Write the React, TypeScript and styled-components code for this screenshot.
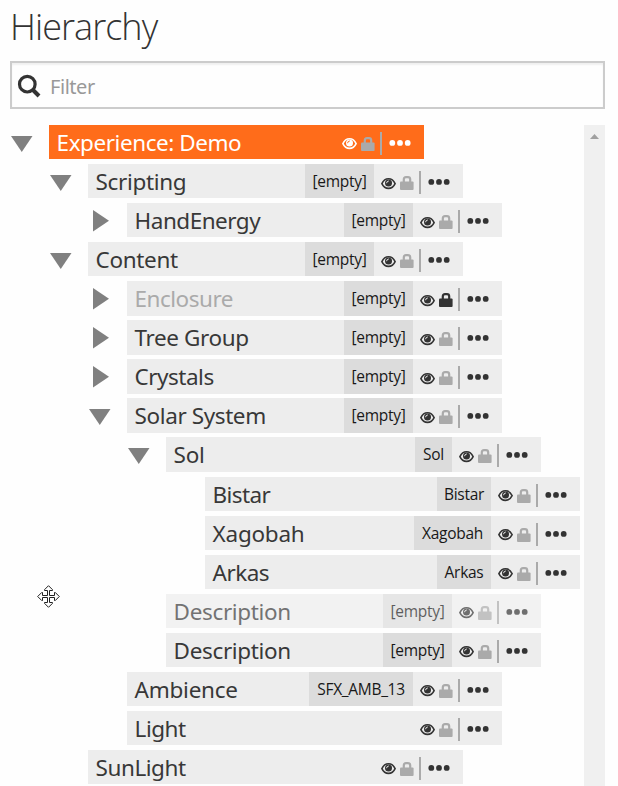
import React from 'react';
import styled, { createGlobalStyle } from 'styled-components';

const GlobalStyle = createGlobalStyle`
  html, body { margin: 0; padding: 0; background: #fefefe; }
  body { overflow: hidden; }
  * { box-sizing: border-box; }
`;

const Panel = styled.div`
  position: relative;
  display: flex;
  flex-direction: column;
  height: 786px;
  padding: 0 13px 0 10px;
  overflow: hidden;
  color: #333;
  font-family: 'Open Sans', 'Noto Sans', sans-serif;
`;

const Title = styled.h1`
  flex: none;
  height: 61px;
  margin: 0;
  padding-top: 1px;
  font-size: 36px;
  font-weight: 300;
  line-height: 52px;
  letter-spacing: -0.95px;
`;

const SearchBox = styled.label`
  flex: none;
  display: flex;
  align-items: center;
  height: 48px;
  padding-left: 5px;
  border: 2px solid #ccc;
  background: #fefefe;
  box-shadow: inset 0 2px 2px rgba(0, 0, 0, 0.06);
`;

const SearchIcon = styled.svg`
  flex: none;
  margin-top: 2px;
`;

const SearchInput = styled.input`
  flex: 1;
  margin: 4px 0 0 9px;
  padding: 0;
  border: 0;
  outline: 0;
  background: transparent;
  color: #333;
  font: 20px/28px 'Noto Sans', 'Open Sans', sans-serif;
  letter-spacing: -0.45px;
  &::placeholder { color: #999; opacity: 1; }
`;

const Body = styled.div`
  flex: 1;
  display: flex;
  justify-content: space-between;
  min-height: 0;
  padding-top: 15.96px;
`;

const Tree = styled.div`
  display: flex;
  flex-direction: column;
  gap: 4.75px;
`;

const Line = styled.div<{ $depth: number }>`
  flex: none;
  display: flex;
  height: 34.3125px;
  padding-left: ${p => p.$depth * 39}px;
`;

const Toggle = styled.div<{ $open?: boolean }>`
  width: 39px;
  padding: ${p => (p.$open ? '11px 0 0 1px' : '6.5px 0 0 5px')};
  svg { display: block; }
`;

const Item = styled.div<{ $selected?: boolean; $faded?: boolean }>`
  display: flex;
  width: 375px;
  background: ${p => (p.$selected ? '#ff6c1a' : '#ededed')};
  color: ${p => (p.$selected ? '#fff' : '#383838')};
  opacity: ${p => (p.$faded ? 0.7 : 1)};
`;

const Name = styled.span<{ $muted?: boolean; $spacing: number }>`
  flex: 1;
  padding-left: 7.6px;
  font-family: 'Noto Sans', 'Open Sans', sans-serif;
  font-size: 22.5px;
  line-height: 36px;
  white-space: nowrap;
  letter-spacing: ${p => p.$spacing}px;
  color: ${p => (p.$muted ? '#aaa' : 'inherit')};
`;

const Tag = styled.span<{ $width: number }>`
  flex: none;
  width: ${p => p.$width}px;
  background: #dcdcdc;
  color: #181818;
  font-size: 15.5px;
  line-height: 35px;
  text-align: center;
  white-space: nowrap;
  letter-spacing: -0.3px;
`;

const Controls = styled.div`
  flex: none;
  display: flex;
  width: 89px;
  svg { display: block; flex: none; }
`;

const Divider = styled.i`
  width: 2px;
  height: 23px;
  margin: 7px 0 0 5px;
  background: #aaa;
`;

const EyeSlot = styled.span`
  padding: 12.5px 4px 0 7px;
`;

const LockSlot = styled.span`
  padding-top: 12px;
`;

const DotsSlot = styled.span`
  padding: 14px 0 0 7.4px;
`;

const Scrollbar = styled.div`
  width: 21px;
  padding: 9px 0 0 6px;
  background: #f0f0f0;
  svg { display: block; }
`;

const MoveCursor = styled.svg`
  position: absolute;
  left: 37px;
  top: 585px;
`;

const Eye = ({ color, hole }: { color: string; hole: string }) => (
  <svg width="15" height="13" viewBox="0 0 15 13">
    <path d="M.9 6.6C3.9.2 11.1.2 14.1 6.6 11.1 13 3.9 13 .9 6.6Z" fill="none" stroke={color} strokeWidth="1.6" />
    <circle cx="7.5" cy="5.9" r="3.5" fill={color} />
    <path d="M5.6 5.8Q5.8 4.1 7.4 4" fill="none" stroke={hole} strokeWidth="1" strokeLinecap="round" />
  </svg>
);

const Lock = ({ color }: { color: string }) => (
  <svg width="14" height="14" viewBox="0 0 14 14">
    <path d="M3.8 7V3.5Q3.8 1.2 6 1.2H8Q10.2 1.2 10.2 3.5V7" fill="none" stroke={color} strokeWidth="2.2" />
    <rect y="5.5" width="13.6" height="8.5" rx="1" fill={color} />
  </svg>
);

const Dots = ({ color }: { color: string }) => (
  <svg width="23" height="7" viewBox="0 0 23 7" fill={color}>
    <circle cx="3.3" cy="3.9" r="2.9" />
    <circle cx="11" cy="3.9" r="2.9" />
    <circle cx="18.7" cy="3.9" r="2.9" />
  </svg>
);

interface Node {
  name: string;
  depth: number;
  open?: boolean;
  tag?: string;
  tagWidth?: number;
  selected?: boolean;
  muted?: boolean;
  faded?: boolean;
  locked?: boolean;
  spacing?: number;
}

const EMPTY = { tag: '[empty]', tagWidth: 69 };

const nodes: Node[] = [
  { name: 'Experience: Demo', depth: 0, open: true, selected: true, spacing: -0.45 },
  { name: 'Scripting', depth: 1, open: true, spacing: -0.35, ...EMPTY },
  { name: 'HandEnergy', depth: 2, open: false, ...EMPTY },
  { name: 'Content', depth: 1, open: true, spacing: -0.35, ...EMPTY },
  { name: 'Enclosure', depth: 2, open: false, muted: true, locked: true, ...EMPTY },
  { name: 'Tree Group', depth: 2, open: false, spacing: -0.4, ...EMPTY },
  { name: 'Crystals', depth: 2, open: false, spacing: -0.5, ...EMPTY },
  { name: 'Solar System', depth: 2, open: true, spacing: -0.4, ...EMPTY },
  { name: 'Sol', depth: 3, open: true, tag: 'Sol', tagWidth: 37, spacing: -0.3 },
  { name: 'Bistar', depth: 4, tag: 'Bistar', tagWidth: 54, spacing: -0.6 },
  { name: 'Xagobah', depth: 4, tag: 'Xagobah', tagWidth: 77, spacing: -0.25 },
  { name: 'Arkas', depth: 4, tag: 'Arkas', tagWidth: 54, spacing: -0.55 },
  { name: 'Description', depth: 3, faded: true, spacing: -0.35, ...EMPTY },
  { name: 'Description', depth: 3, spacing: -0.35, ...EMPTY },
  { name: 'Ambience', depth: 2, tag: 'SFX_AMB_13', tagWidth: 104, spacing: -0.25 },
  { name: 'Light', depth: 2 },
  { name: 'SunLight', depth: 1, spacing: -0.45 },
];

const TreeRow = ({ node }: { node: Node }) => {
  const ink = node.selected ? '#fff' : '#333';
  return (
    <Line $depth={node.depth}>
      <Toggle $open={node.open}>
        {node.open === true && (
          <svg width="22" height="16" viewBox="0 0 22 16"><path d="M0 0H21.5L10.75 16Z" fill="#808080" /></svg>
        )}
        {node.open === false && (
          <svg width="16" height="22" viewBox="0 0 16 22"><path d="M0 0V21.5L16 10.75Z" fill="#808080" /></svg>
        )}
      </Toggle>
      <Item $selected={node.selected} $faded={node.faded}>
        <Name $muted={node.muted} $spacing={node.spacing ?? -0.5}>{node.name}</Name>
        {node.tag && <Tag $width={node.tagWidth ?? 69}>{node.tag}</Tag>}
        <Controls>
          <EyeSlot><Eye color={ink} hole={node.selected ? '#ff6c1a' : '#ededed'} /></EyeSlot>
          <LockSlot><Lock color={node.locked ? '#333' : '#aaa'} /></LockSlot>
          <Divider />
          <DotsSlot><Dots color={ink} /></DotsSlot>
        </Controls>
      </Item>
    </Line>
  );
};

export default function App() {
  return (
    <>
      <GlobalStyle />
      <Panel>
        <Title>Hierarchy</Title>
        <SearchBox>
          <SearchIcon width="24" height="24" viewBox="0 0 24 24" fill="none" stroke="#333">
            <circle cx="10.3" cy="10.2" r="7.8" strokeWidth="3.2" />
            <path d="M16 16L22 22" strokeWidth="4" />
          </SearchIcon>
          <SearchInput placeholder="Filter" />
        </SearchBox>
        <Body>
          <Tree>
            {nodes.map((node, i) => <TreeRow key={i} node={node} />)}
          </Tree>
          <Scrollbar>
            <svg width="9" height="5" viewBox="0 0 9 5"><path d="M0 5H9L4.5 0Z" fill="#a0a0a0" /></svg>
          </Scrollbar>
        </Body>
        <MoveCursor width="23" height="23" viewBox="0 0 23 23">
          <path
            d="M11.5.7L15.5 4.7V5.5H12.5V10.5H17.5V7.5H18.3L22.3 11.5L18.3 15.5H17.5V12.5H12.5V17.5H15.5V18.3L11.5 22.3L7.5 18.3V17.5H10.5V12.5H5.5V15.5H4.7L.7 11.5L4.7 7.5H5.5V10.5H10.5V5.5H7.5V4.7Z"
            fill="#fff" stroke="#222" strokeWidth="1"
          />
        </MoveCursor>
      </Panel>
    </>
  );
}
